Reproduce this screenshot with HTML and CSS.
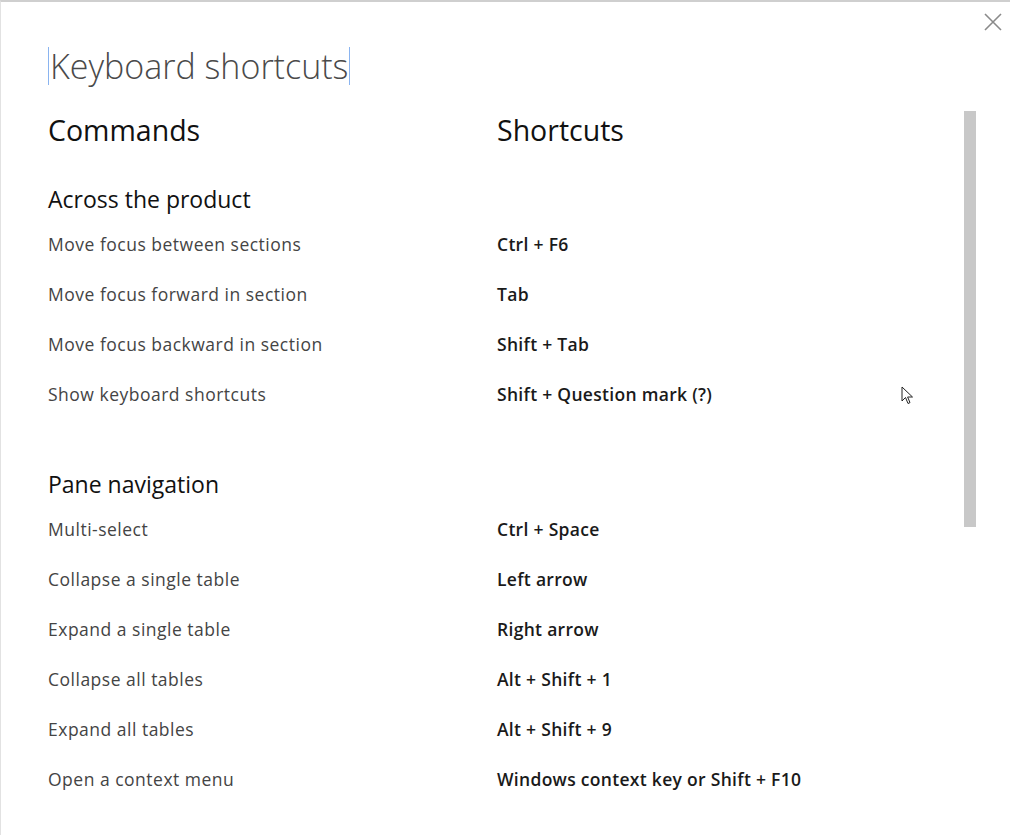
FILE: index.html
```html
<!DOCTYPE html>
<html lang="en">
  <head>
    <meta charset="UTF-8" />
    <meta name="viewport" content="width=device-width, initial-scale=1.0" />
    <title>Keyboard shortcuts</title>
    <link rel="stylesheet" href="styles.css">
  </head>
  <body>
    <div class="dialog">
      <button class="close-btn" aria-label="Close">
        <svg width="18" height="18" viewBox="0 0 18 18">
          <path d="M1 1 L17 17 M17 1 L1 17" stroke="#8a8a8a" stroke-width="1.6" fill="none" />
        </svg>
      </button>

      <div class="title-row">
        <h1 class="title">Keyboard shortcuts</h1>
      </div>

      <div class="scroll-area">
        <div class="content">
          <div class="row head-row">
            <h2 class="col-title">Commands</h2>
            <h2 class="col-title">Shortcuts</h2>
          </div>

          <h3 class="section-title">Across the product</h3>
          <div class="row"><span class="cmd">Move focus between sections</span><span class="key">Ctrl + F6</span></div>
          <div class="row"><span class="cmd">Move focus forward in section</span><span class="key">Tab</span></div>
          <div class="row"><span class="cmd">Move focus backward in section</span><span class="key">Shift + Tab</span></div>
          <div class="row"><span class="cmd">Show keyboard shortcuts</span><span class="key">Shift + Question mark (?)</span></div>

          <h3 class="section-title second">Pane navigation</h3>
          <div class="row"><span class="cmd">Multi-select</span><span class="key">Ctrl + Space</span></div>
          <div class="row"><span class="cmd">Collapse a single table</span><span class="key">Left arrow</span></div>
          <div class="row"><span class="cmd">Expand a single table</span><span class="key">Right arrow</span></div>
          <div class="row"><span class="cmd">Collapse all tables</span><span class="key">Alt + Shift + 1</span></div>
          <div class="row"><span class="cmd">Expand all tables</span><span class="key">Alt + Shift + 9</span></div>
          <div class="row"><span class="cmd">Open a context menu</span><span class="key">Windows context key or Shift + F10</span></div>
        </div>
        <div class="scroll-track">
          <div class="scroll-thumb"></div>
        </div>
      </div>

      <!-- mouse pointer -->
      <svg class="pointer" width="14" height="20" viewBox="0 0 14 20">
        <path d="M1 1 L1 15 L4.5 11.5 L7 17.5 L9 16.6 L6.6 11 L11.5 11 Z" fill="#fff" stroke="#222" stroke-width="1" />
      </svg>
    </div>
  </body>
</html>
```

FILE: styles.css
```css
html,
body {
  margin: 0;
  padding: 0;
  background-color: #fff;
}

body {
  font-family: "Open Sans", "Noto Sans", sans-serif;
  color: #000;
}

.dialog {
  position: relative;
  height: 835px;
  box-sizing: border-box;
  border-top: 2px solid #cfcfcf;
  border-left: 1px solid #e2e2e2;
  overflow: hidden;
}

.close-btn {
  position: absolute;
  top: 11px;
  right: 8px;
  padding: 0;
  border: none;
  background: none;
  cursor: pointer;
}

.title-row {
  padding: 45px 0 0 47px;
  height: 64px;
}

.title {
  display: inline-block;
  margin: 0;
  padding: 0 1px;
  font-size: 34px;
  font-weight: 300;
  line-height: 38px;
  color: #4a4a4a;
  border-left: 1px solid #8ab4f0;
  border-right: 1px solid #8ab4f0;
}

.scroll-area {
  display: flex;
}

.content {
  flex: 1;
  padding-left: 47px;
}

.row {
  display: grid;
  grid-template-columns: 449px 1fr;
  height: 50px;
  align-items: center;
}

.head-row {
  height: 38px;
  margin-bottom: 30px;
}

.col-title {
  margin: 0;
  font-size: 28.5px;
  font-weight: 400;
  color: #111;
}

.section-title {
  margin: 0;
  height: 40px;
  line-height: 40px;
  font-size: 23px;
  font-weight: 400;
  color: #111;
}

.section-title.second {
  margin-top: 45px;
}

.cmd {
  font-size: 17.5px;
  letter-spacing: 0.5px;
  color: #444;
}

.key {
  font-size: 17.5px;
  letter-spacing: 0.3px;
  color: #1a1a1a;
  font-weight: 600;
}

.scroll-track {
  width: 12px;
  margin-right: 34px;
}

.scroll-thumb {
  height: 416px;
  background-color: #c8c8c8;
}

.pointer {
  position: absolute;
  left: 900px;
  top: 384px;
}
```
